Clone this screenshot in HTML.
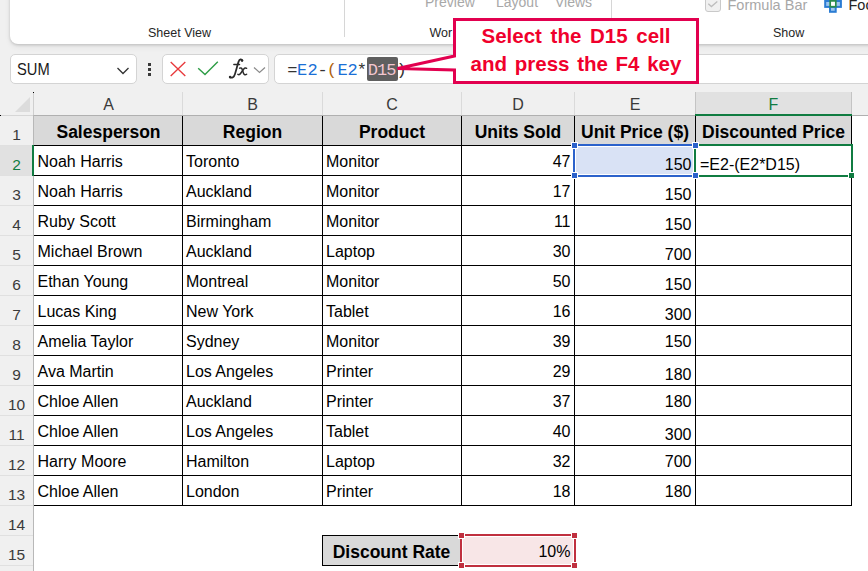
<!DOCTYPE html>
<html><head><meta charset="utf-8"><style>
html,body{margin:0;padding:0;}
body{width:868px;height:571px;overflow:hidden;position:relative;background:#f0f0f0;font-family:"Liberation Sans", sans-serif;}
.t{position:absolute;white-space:nowrap;}
.r{position:absolute;}
</style></head><body>
<div class="r" style="left:10px;top:-20px;width:900px;height:64px;background:#fff;border-radius:0 0 0 8px;box-shadow:0 1px 3px rgba(0,0,0,0.18), 0 3px 6px rgba(0,0,0,0.06);"></div>
<div class="r" style="left:344px;top:0px;width:1px;height:37px;background:#d6d6d6;"></div>
<div class="r" style="left:611px;top:0px;width:1px;height:37px;background:#d6d6d6;"></div>
<div class="t" style="left:148px;top:27px;font-size:12.5px;line-height:12.5px;color:#262626;">Sheet View</div>
<div class="t" style="left:429.5px;top:27px;font-size:12.5px;line-height:12.5px;color:#262626;">Wor</div>
<div class="t" style="left:425px;top:-5px;font-size:14px;line-height:14px;color:#a8a8a8;">Preview</div>
<div class="t" style="left:496px;top:-5px;font-size:14px;line-height:14px;color:#a8a8a8;">Layout</div>
<div class="t" style="left:555px;top:-5px;font-size:14px;line-height:14px;color:#a8a8a8;">Views</div>
<div class="t" style="left:773px;top:27px;font-size:12.5px;line-height:12.5px;color:#262626;">Show</div>
<div class="r" style="left:705px;top:-4px;width:16px;height:16px;border:1px solid #c9c9c9;border-radius:3px;background:#f0f0f0;box-sizing:border-box;"></div>
<svg class="r" style="left:705px;top:-4px" width="16" height="16"><path d="M3.3 7.8 L6.4 10.6 L12.3 5.4" stroke="#bdbdbd" stroke-width="1.3" fill="none"/></svg>
<div class="t" style="left:727.5px;top:-2px;font-size:14.5px;line-height:14.5px;color:#a8a8a8;">Formula Bar</div>
<svg class="r" style="left:822px;top:-4px" width="22" height="18"><rect x="3.2" y="5" width="15.7" height="5.9" fill="#9cc6f0" stroke="#2b7cd3" stroke-width="2"/><rect x="8" y="11" width="5.7" height="4.8" fill="#9cc6f0" stroke="#2b7cd3" stroke-width="2"/><rect x="8.2" y="4.9" width="5.6" height="5.8" fill="#fff" stroke="#2a8c4a" stroke-width="1.7"/></svg>
<div class="t" style="left:848.5px;top:-2px;font-size:14.5px;line-height:14.5px;color:#262626;">Foo</div>
<div class="r" style="left:10px;top:54px;width:127px;height:30px;background:#fff;border:1px solid #d4d4d4;border-radius:5px;box-sizing:border-box;"></div>
<div class="t" style="left:17px;top:61px;font-size:17px;line-height:17px;color:#1a1a1a;transform:scaleX(0.865);transform-origin:0 0;">SUM</div>
<svg class="r" style="left:116px;top:66px" width="15" height="10"><path d="M1.5 2 L7 7.5 L12.5 2" stroke="#333" stroke-width="1.3" fill="none"/></svg>
<div class="r" style="left:148px;top:63px;width:3px;height:3px;background:#3a3a3a;"></div>
<div class="r" style="left:148px;top:68px;width:3px;height:3px;background:#3a3a3a;"></div>
<div class="r" style="left:148px;top:73px;width:3px;height:3px;background:#3a3a3a;"></div>
<div class="r" style="left:162px;top:54px;width:107px;height:30px;background:#fff;border:1px solid #d4d4d4;border-radius:5px;box-sizing:border-box;"></div>
<svg class="r" style="left:169px;top:61px" width="18" height="17"><path d="M1.7 1 L16.3 15 M16.3 1 L1.7 15" stroke="#e8393c" stroke-width="1.35" fill="none"/></svg>
<svg class="r" style="left:197px;top:61px" width="23" height="16"><path d="M1.2 7.2 L8 13.6 L20.8 0.8" stroke="#2f9e47" stroke-width="1.45" fill="none"/></svg>
<svg class="r" style="left:222px;top:55px" width="30" height="27" fill="none" stroke="#2b2b2b" stroke-linecap="round"><path d="M20.3 5.6 C19.6 3.9 17.6 3.9 16.6 6.6 C15.6 9.5 14.2 15 12.9 19.2 C12.1 21.9 10.2 23.4 7.9 22.4" stroke-width="1.75"/><circle cx="20" cy="5.6" r="1.25" fill="#2b2b2b" stroke="none"/><circle cx="8.1" cy="22" r="1.3" fill="#2b2b2b" stroke="none"/><path d="M11.8 9.5 L17.6 9.5" stroke-width="1.3"/><path d="M17.6 13.2 C19.2 12.4 19.9 13.4 20.4 15 L21.5 18.2 C22.1 19.9 23.3 20.3 24.6 19.2" stroke-width="1.5"/><path d="M24.6 13.3 C23.6 12.5 22.6 13 21.6 14.3 L18.9 18 C17.9 19.6 16.9 20 15.9 19.4" stroke-width="1.5"/></svg>
<svg class="r" style="left:253px;top:66px" width="15" height="9"><path d="M1 1.5 L6.5 6.5 L12 1.5" stroke="#8a8a8a" stroke-width="1.2" fill="none"/></svg>
<div class="r" style="left:274px;top:54px;width:620px;height:30px;background:#fff;border:1px solid #d4d4d4;border-radius:5px;box-sizing:border-box;"></div>
<div class="r" style="left:367px;top:57px;width:31px;height:24px;background:#5f5f5f;border-radius:2px;"></div>
<div class="t" style="left:287.2px;top:62px;font-size:17px;line-height:17px;color:#333;font-family:'Liberation Mono', monospace;">=</div>
<div class="t" style="left:297.02px;top:62px;font-size:17px;line-height:17px;color:#1a6fd6;font-family:'Liberation Mono', monospace;">E</div>
<div class="t" style="left:307.54px;top:62px;font-size:17px;line-height:17px;color:#1a6fd6;font-family:'Liberation Mono', monospace;">2</div>
<div class="t" style="left:317.56px;top:62px;font-size:17px;line-height:17px;color:#333;font-family:'Liberation Mono', monospace;">-</div>
<div class="t" style="left:326.78px;top:62px;font-size:17px;line-height:17px;color:#b0620c;font-family:'Liberation Mono', monospace;">(</div>
<div class="t" style="left:337.6px;top:62px;font-size:17px;line-height:17px;color:#1a6fd6;font-family:'Liberation Mono', monospace;">E</div>
<div class="t" style="left:347.62px;top:62px;font-size:17px;line-height:17px;color:#1a6fd6;font-family:'Liberation Mono', monospace;">2</div>
<div class="t" style="left:356.84px;top:62px;font-size:17px;line-height:17px;color:#333;font-family:'Liberation Mono', monospace;">*</div>
<div class="t" style="left:367.66px;top:62px;font-size:17px;line-height:17px;color:#f3c6d0;font-family:'Liberation Mono', monospace;">D</div>
<div class="t" style="left:376.88px;top:62px;font-size:17px;line-height:17px;color:#f3c6d0;font-family:'Liberation Mono', monospace;">1</div>
<div class="t" style="left:386.3px;top:62px;font-size:17px;line-height:17px;color:#f3c6d0;font-family:'Liberation Mono', monospace;">5</div>
<div class="t" style="left:396.52px;top:62px;font-size:17px;line-height:17px;color:#333;font-family:'Liberation Mono', monospace;">)</div>
<div class="r" style="left:0px;top:85px;width:868px;height:30px;background:#f0f0f0;"></div>
<div class="r" style="left:695px;top:92px;width:157px;height:23px;background:#e1e1e1;"></div>
<div class="r" style="left:182px;top:92px;width:1px;height:23px;background:#dadada;"></div>
<div class="r" style="left:322px;top:92px;width:1px;height:23px;background:#dadada;"></div>
<div class="r" style="left:461px;top:92px;width:1px;height:23px;background:#dadada;"></div>
<div class="r" style="left:574px;top:92px;width:1px;height:23px;background:#dadada;"></div>
<div class="r" style="left:695px;top:92px;width:1px;height:23px;background:#c4c4c4;"></div>
<div class="r" style="left:851px;top:92px;width:1px;height:23px;background:#c4c4c4;"></div>
<div class="r" style="left:34px;top:115px;width:834px;height:1px;background:#b0b0b0;"></div>
<div class="r" style="left:0px;top:115px;width:34px;height:1px;background:#d6d6d6;"></div>
<div class="r" style="left:695px;top:114px;width:157px;height:2px;background:#107c41;"></div>
<svg class="r" style="left:14px;top:96px" width="17" height="17"><path d="M16 1 L16 16 L1 16 Z" fill="#dcdcdc"/></svg>
<div class="r" style="left:33px;top:92px;width:1px;height:23px;background:#cfcfcf;"></div>
<div class="r" style="left:33px;top:92px;width:1px;height:1px;background:#000;"></div>
<div class="r" style="left:0px;top:115px;width:1px;height:1px;background:#000;"></div>
<div class="t" style="left:58.5px;width:100px;text-align:center;top:97px;font-size:16px;line-height:16px;color:#3a3a3a;">A</div>
<div class="t" style="left:202.5px;width:100px;text-align:center;top:97px;font-size:16px;line-height:16px;color:#3a3a3a;">B</div>
<div class="t" style="left:342.0px;width:100px;text-align:center;top:97px;font-size:16px;line-height:16px;color:#3a3a3a;">C</div>
<div class="t" style="left:468.0px;width:100px;text-align:center;top:97px;font-size:16px;line-height:16px;color:#3a3a3a;">D</div>
<div class="t" style="left:585.0px;width:100px;text-align:center;top:97px;font-size:16px;line-height:16px;color:#3a3a3a;">E</div>
<div class="t" style="left:723.5px;width:100px;text-align:center;top:97px;font-size:16px;line-height:16px;color:#107c41;">F</div>
<div class="r" style="left:0px;top:116px;width:33px;height:455px;background:#f0f0f0;"></div>
<div class="r" style="left:0px;top:146px;width:32px;height:30px;background:#e1e1e1;"></div>
<div class="r" style="left:0px;top:145px;width:33px;height:1px;background:#e0e0e0;"></div>
<div class="r" style="left:0px;top:175px;width:33px;height:1px;background:#e0e0e0;"></div>
<div class="r" style="left:0px;top:205px;width:33px;height:1px;background:#e0e0e0;"></div>
<div class="r" style="left:0px;top:235px;width:33px;height:1px;background:#e0e0e0;"></div>
<div class="r" style="left:0px;top:265px;width:33px;height:1px;background:#e0e0e0;"></div>
<div class="r" style="left:0px;top:295px;width:33px;height:1px;background:#e0e0e0;"></div>
<div class="r" style="left:0px;top:325px;width:33px;height:1px;background:#e0e0e0;"></div>
<div class="r" style="left:0px;top:355px;width:33px;height:1px;background:#e0e0e0;"></div>
<div class="r" style="left:0px;top:385px;width:33px;height:1px;background:#e0e0e0;"></div>
<div class="r" style="left:0px;top:415px;width:33px;height:1px;background:#e0e0e0;"></div>
<div class="r" style="left:0px;top:445px;width:33px;height:1px;background:#e0e0e0;"></div>
<div class="r" style="left:0px;top:475px;width:33px;height:1px;background:#e0e0e0;"></div>
<div class="r" style="left:0px;top:505px;width:33px;height:1px;background:#e0e0e0;"></div>
<div class="r" style="left:0px;top:535px;width:33px;height:1px;background:#e0e0e0;"></div>
<div class="r" style="left:0px;top:565px;width:33px;height:1px;background:#e0e0e0;"></div>
<div class="r" style="left:33px;top:115px;width:1px;height:456px;background:#b8b8b8;"></div>
<div class="r" style="left:32px;top:145px;width:2px;height:31px;background:#107c41;"></div>
<div class="t" style="left:-3.5px;width:40px;text-align:center;top:127px;font-size:15.5px;line-height:15.5px;color:#3a3a3a;">1</div>
<div class="t" style="left:-3.5px;width:40px;text-align:center;top:157px;font-size:15.5px;line-height:15.5px;color:#107c41;">2</div>
<div class="t" style="left:-3.5px;width:40px;text-align:center;top:187px;font-size:15.5px;line-height:15.5px;color:#3a3a3a;">3</div>
<div class="t" style="left:-3.5px;width:40px;text-align:center;top:217px;font-size:15.5px;line-height:15.5px;color:#3a3a3a;">4</div>
<div class="t" style="left:-3.5px;width:40px;text-align:center;top:247px;font-size:15.5px;line-height:15.5px;color:#3a3a3a;">5</div>
<div class="t" style="left:-3.5px;width:40px;text-align:center;top:277px;font-size:15.5px;line-height:15.5px;color:#3a3a3a;">6</div>
<div class="t" style="left:-3.5px;width:40px;text-align:center;top:307px;font-size:15.5px;line-height:15.5px;color:#3a3a3a;">7</div>
<div class="t" style="left:-3.5px;width:40px;text-align:center;top:337px;font-size:15.5px;line-height:15.5px;color:#3a3a3a;">8</div>
<div class="t" style="left:-3.5px;width:40px;text-align:center;top:367px;font-size:15.5px;line-height:15.5px;color:#3a3a3a;">9</div>
<div class="t" style="left:-3.5px;width:40px;text-align:center;top:397px;font-size:15.5px;line-height:15.5px;color:#3a3a3a;">10</div>
<div class="t" style="left:-3.5px;width:40px;text-align:center;top:427px;font-size:15.5px;line-height:15.5px;color:#3a3a3a;">11</div>
<div class="t" style="left:-3.5px;width:40px;text-align:center;top:457px;font-size:15.5px;line-height:15.5px;color:#3a3a3a;">12</div>
<div class="t" style="left:-3.5px;width:40px;text-align:center;top:487px;font-size:15.5px;line-height:15.5px;color:#3a3a3a;">13</div>
<div class="t" style="left:-3.5px;width:40px;text-align:center;top:517px;font-size:15.5px;line-height:15.5px;color:#3a3a3a;">14</div>
<div class="t" style="left:-3.5px;width:40px;text-align:center;top:547px;font-size:15.5px;line-height:15.5px;color:#3a3a3a;">15</div>
<div class="r" style="left:34px;top:116px;width:834px;height:455px;background:#fff;"></div>
<div class="r" style="left:34px;top:116px;width:817px;height:29px;background:#d9d9d9;"></div>
<div class="r" style="left:182px;top:116px;width:1px;height:390px;background:#000;"></div>
<div class="r" style="left:322px;top:116px;width:1px;height:390px;background:#000;"></div>
<div class="r" style="left:461px;top:116px;width:1px;height:390px;background:#000;"></div>
<div class="r" style="left:574px;top:116px;width:1px;height:390px;background:#000;"></div>
<div class="r" style="left:695px;top:116px;width:1px;height:390px;background:#000;"></div>
<div class="r" style="left:851px;top:116px;width:1px;height:390px;background:#000;"></div>
<div class="r" style="left:34px;top:145px;width:818px;height:1px;background:#000;"></div>
<div class="r" style="left:34px;top:175px;width:818px;height:1px;background:#000;"></div>
<div class="r" style="left:34px;top:205px;width:818px;height:1px;background:#000;"></div>
<div class="r" style="left:34px;top:235px;width:818px;height:1px;background:#000;"></div>
<div class="r" style="left:34px;top:265px;width:818px;height:1px;background:#000;"></div>
<div class="r" style="left:34px;top:295px;width:818px;height:1px;background:#000;"></div>
<div class="r" style="left:34px;top:325px;width:818px;height:1px;background:#000;"></div>
<div class="r" style="left:34px;top:355px;width:818px;height:1px;background:#000;"></div>
<div class="r" style="left:34px;top:385px;width:818px;height:1px;background:#000;"></div>
<div class="r" style="left:34px;top:415px;width:818px;height:1px;background:#000;"></div>
<div class="r" style="left:34px;top:445px;width:818px;height:1px;background:#000;"></div>
<div class="r" style="left:34px;top:475px;width:818px;height:1px;background:#000;"></div>
<div class="r" style="left:34px;top:505px;width:818px;height:1px;background:#000;"></div>
<div class="t" style="left:-41.5px;width:300px;text-align:center;top:124px;font-size:17.5px;line-height:17.5px;color:#000;font-weight:bold;">Salesperson</div>
<div class="t" style="left:102.5px;width:300px;text-align:center;top:124px;font-size:17.5px;line-height:17.5px;color:#000;font-weight:bold;">Region</div>
<div class="t" style="left:242.0px;width:300px;text-align:center;top:124px;font-size:17.5px;line-height:17.5px;color:#000;font-weight:bold;">Product</div>
<div class="t" style="left:368.0px;width:300px;text-align:center;top:124px;font-size:17.5px;line-height:17.5px;color:#000;font-weight:bold;">Units Sold</div>
<div class="t" style="left:485.0px;width:300px;text-align:center;top:124px;font-size:17.5px;line-height:17.5px;color:#000;font-weight:bold;">Unit Price ($)</div>
<div class="t" style="left:623.5px;width:300px;text-align:center;top:124px;font-size:17.5px;line-height:17.5px;color:#000;font-weight:bold;">Discounted Price</div>
<div class="r" style="left:576px;top:147px;width:117px;height:27px;background:#d9e2f5;"></div>
<div class="t" style="left:37.5px;top:154px;font-size:16px;line-height:16px;color:#000;">Noah Harris</div>
<div class="t" style="left:186px;top:154px;font-size:16px;line-height:16px;color:#000;">Toronto</div>
<div class="t" style="left:326px;top:154px;font-size:16px;line-height:16px;color:#000;">Monitor</div>
<div class="t" style="left:470.5px;width:100px;text-align:right;top:154px;font-size:16px;line-height:16px;color:#000;">47</div>
<div class="t" style="left:591.5px;width:100px;text-align:right;top:157px;font-size:16px;line-height:16px;color:#000;">150</div>
<div class="t" style="left:37.5px;top:184px;font-size:16px;line-height:16px;color:#000;">Noah Harris</div>
<div class="t" style="left:186px;top:184px;font-size:16px;line-height:16px;color:#000;">Auckland</div>
<div class="t" style="left:326px;top:184px;font-size:16px;line-height:16px;color:#000;">Monitor</div>
<div class="t" style="left:470.5px;width:100px;text-align:right;top:184px;font-size:16px;line-height:16px;color:#000;">17</div>
<div class="t" style="left:591.5px;width:100px;text-align:right;top:187px;font-size:16px;line-height:16px;color:#000;">150</div>
<div class="t" style="left:37.5px;top:214px;font-size:16px;line-height:16px;color:#000;">Ruby Scott</div>
<div class="t" style="left:186px;top:214px;font-size:16px;line-height:16px;color:#000;">Birmingham</div>
<div class="t" style="left:326px;top:214px;font-size:16px;line-height:16px;color:#000;">Monitor</div>
<div class="t" style="left:470.5px;width:100px;text-align:right;top:214px;font-size:16px;line-height:16px;color:#000;">11</div>
<div class="t" style="left:591.5px;width:100px;text-align:right;top:217px;font-size:16px;line-height:16px;color:#000;">150</div>
<div class="t" style="left:37.5px;top:244px;font-size:16px;line-height:16px;color:#000;">Michael Brown</div>
<div class="t" style="left:186px;top:244px;font-size:16px;line-height:16px;color:#000;">Auckland</div>
<div class="t" style="left:326px;top:244px;font-size:16px;line-height:16px;color:#000;">Laptop</div>
<div class="t" style="left:470.5px;width:100px;text-align:right;top:244px;font-size:16px;line-height:16px;color:#000;">30</div>
<div class="t" style="left:591.5px;width:100px;text-align:right;top:247px;font-size:16px;line-height:16px;color:#000;">700</div>
<div class="t" style="left:37.5px;top:274px;font-size:16px;line-height:16px;color:#000;">Ethan Young</div>
<div class="t" style="left:186px;top:274px;font-size:16px;line-height:16px;color:#000;">Montreal</div>
<div class="t" style="left:326px;top:274px;font-size:16px;line-height:16px;color:#000;">Monitor</div>
<div class="t" style="left:470.5px;width:100px;text-align:right;top:274px;font-size:16px;line-height:16px;color:#000;">50</div>
<div class="t" style="left:591.5px;width:100px;text-align:right;top:277px;font-size:16px;line-height:16px;color:#000;">150</div>
<div class="t" style="left:37.5px;top:304px;font-size:16px;line-height:16px;color:#000;">Lucas King</div>
<div class="t" style="left:186px;top:304px;font-size:16px;line-height:16px;color:#000;">New York</div>
<div class="t" style="left:326px;top:304px;font-size:16px;line-height:16px;color:#000;">Tablet</div>
<div class="t" style="left:470.5px;width:100px;text-align:right;top:304px;font-size:16px;line-height:16px;color:#000;">16</div>
<div class="t" style="left:591.5px;width:100px;text-align:right;top:307px;font-size:16px;line-height:16px;color:#000;">300</div>
<div class="t" style="left:37.5px;top:334px;font-size:16px;line-height:16px;color:#000;">Amelia Taylor</div>
<div class="t" style="left:186px;top:334px;font-size:16px;line-height:16px;color:#000;">Sydney</div>
<div class="t" style="left:326px;top:334px;font-size:16px;line-height:16px;color:#000;">Monitor</div>
<div class="t" style="left:470.5px;width:100px;text-align:right;top:334px;font-size:16px;line-height:16px;color:#000;">39</div>
<div class="t" style="left:591.5px;width:100px;text-align:right;top:334px;font-size:16px;line-height:16px;color:#000;">150</div>
<div class="t" style="left:37.5px;top:364px;font-size:16px;line-height:16px;color:#000;">Ava Martin</div>
<div class="t" style="left:186px;top:364px;font-size:16px;line-height:16px;color:#000;">Los Angeles</div>
<div class="t" style="left:326px;top:364px;font-size:16px;line-height:16px;color:#000;">Printer</div>
<div class="t" style="left:470.5px;width:100px;text-align:right;top:364px;font-size:16px;line-height:16px;color:#000;">29</div>
<div class="t" style="left:591.5px;width:100px;text-align:right;top:367px;font-size:16px;line-height:16px;color:#000;">180</div>
<div class="t" style="left:37.5px;top:394px;font-size:16px;line-height:16px;color:#000;">Chloe Allen</div>
<div class="t" style="left:186px;top:394px;font-size:16px;line-height:16px;color:#000;">Auckland</div>
<div class="t" style="left:326px;top:394px;font-size:16px;line-height:16px;color:#000;">Printer</div>
<div class="t" style="left:470.5px;width:100px;text-align:right;top:394px;font-size:16px;line-height:16px;color:#000;">37</div>
<div class="t" style="left:591.5px;width:100px;text-align:right;top:394px;font-size:16px;line-height:16px;color:#000;">180</div>
<div class="t" style="left:37.5px;top:424px;font-size:16px;line-height:16px;color:#000;">Chloe Allen</div>
<div class="t" style="left:186px;top:424px;font-size:16px;line-height:16px;color:#000;">Los Angeles</div>
<div class="t" style="left:326px;top:424px;font-size:16px;line-height:16px;color:#000;">Tablet</div>
<div class="t" style="left:470.5px;width:100px;text-align:right;top:424px;font-size:16px;line-height:16px;color:#000;">40</div>
<div class="t" style="left:591.5px;width:100px;text-align:right;top:427px;font-size:16px;line-height:16px;color:#000;">300</div>
<div class="t" style="left:37.5px;top:454px;font-size:16px;line-height:16px;color:#000;">Harry Moore</div>
<div class="t" style="left:186px;top:454px;font-size:16px;line-height:16px;color:#000;">Hamilton</div>
<div class="t" style="left:326px;top:454px;font-size:16px;line-height:16px;color:#000;">Laptop</div>
<div class="t" style="left:470.5px;width:100px;text-align:right;top:454px;font-size:16px;line-height:16px;color:#000;">32</div>
<div class="t" style="left:591.5px;width:100px;text-align:right;top:454px;font-size:16px;line-height:16px;color:#000;">700</div>
<div class="t" style="left:37.5px;top:484px;font-size:16px;line-height:16px;color:#000;">Chloe Allen</div>
<div class="t" style="left:186px;top:484px;font-size:16px;line-height:16px;color:#000;">London</div>
<div class="t" style="left:326px;top:484px;font-size:16px;line-height:16px;color:#000;">Printer</div>
<div class="t" style="left:470.5px;width:100px;text-align:right;top:484px;font-size:16px;line-height:16px;color:#000;">18</div>
<div class="t" style="left:591.5px;width:100px;text-align:right;top:484px;font-size:16px;line-height:16px;color:#000;">180</div>
<div class="r" style="left:573px;top:144px;width:123px;height:33px;border:2px solid #2c62cb;box-sizing:border-box;"></div>
<div class="r" style="left:694px;top:144px;width:159px;height:33px;border:2px solid #107c41;box-sizing:border-box;"></div>
<div class="r" style="left:571px;top:142px;width:5px;height:5px;background:#2c62cb;border:1px solid #fff;box-sizing:content-box;"></div>
<div class="r" style="left:692px;top:142px;width:5px;height:5px;background:#2c62cb;border:1px solid #fff;box-sizing:content-box;"></div>
<div class="r" style="left:571px;top:172px;width:5px;height:5px;background:#2c62cb;border:1px solid #fff;box-sizing:content-box;"></div>
<div class="r" style="left:692px;top:172px;width:5px;height:5px;background:#2c62cb;border:1px solid #fff;box-sizing:content-box;"></div>
<div class="r" style="left:848px;top:172px;width:5px;height:5px;background:#107c41;border:1px solid #fff;border-right:0;border-bottom:0;box-sizing:content-box;"></div>
<div class="t" style="left:700px;top:157px;font-size:16px;line-height:16px;color:#000;">=E2-(E2*D15)</div>
<div class="r" style="left:322px;top:535px;width:139px;height:31px;background:#d9d9d9;border:1px solid #000;box-sizing:border-box;"></div>
<div class="t" style="left:291.5px;width:200px;text-align:center;top:544px;font-size:17.5px;line-height:17.5px;color:#000;font-weight:bold;">Discount Rate</div>
<div class="r" style="left:463px;top:537px;width:110px;height:27px;background:#f8e6e7;"></div>
<div class="r" style="left:460px;top:534px;width:116px;height:33px;border:2px solid #c0303f;box-sizing:border-box;"></div>
<div class="r" style="left:458px;top:532px;width:5px;height:5px;background:#c0303f;border:1px solid #fff;box-sizing:content-box;"></div>
<div class="r" style="left:571px;top:532px;width:5px;height:5px;background:#c0303f;border:1px solid #fff;box-sizing:content-box;"></div>
<div class="r" style="left:458px;top:562px;width:5px;height:5px;background:#c0303f;border:1px solid #fff;box-sizing:content-box;"></div>
<div class="r" style="left:571px;top:562px;width:5px;height:5px;background:#c0303f;border:1px solid #fff;box-sizing:content-box;"></div>
<div class="t" style="left:470.5px;width:100px;text-align:right;top:544px;font-size:16px;line-height:16px;color:#000;">10%</div>
<svg class="r" style="left:0;top:0" width="868" height="100"><path d="M454.5 19.5 L697.5 19.5 L697.5 82.5 L454.5 82.5 L454.5 70 L397.5 68.5 L454.5 56 Z" fill="#fff" stroke="#e2004f" stroke-width="3" stroke-linejoin="miter"/></svg>
<div class="t" style="left:426.0px;width:300px;text-align:center;top:26px;font-size:20.5px;line-height:20.5px;color:#f0002c;font-weight:bold;word-spacing:3px;">Select the D15 cell</div>
<div class="t" style="left:426.0px;width:300px;text-align:center;top:54px;font-size:20.5px;line-height:20.5px;color:#f0002c;font-weight:bold;word-spacing:2px;">and press the F4 key</div>
</body></html>
